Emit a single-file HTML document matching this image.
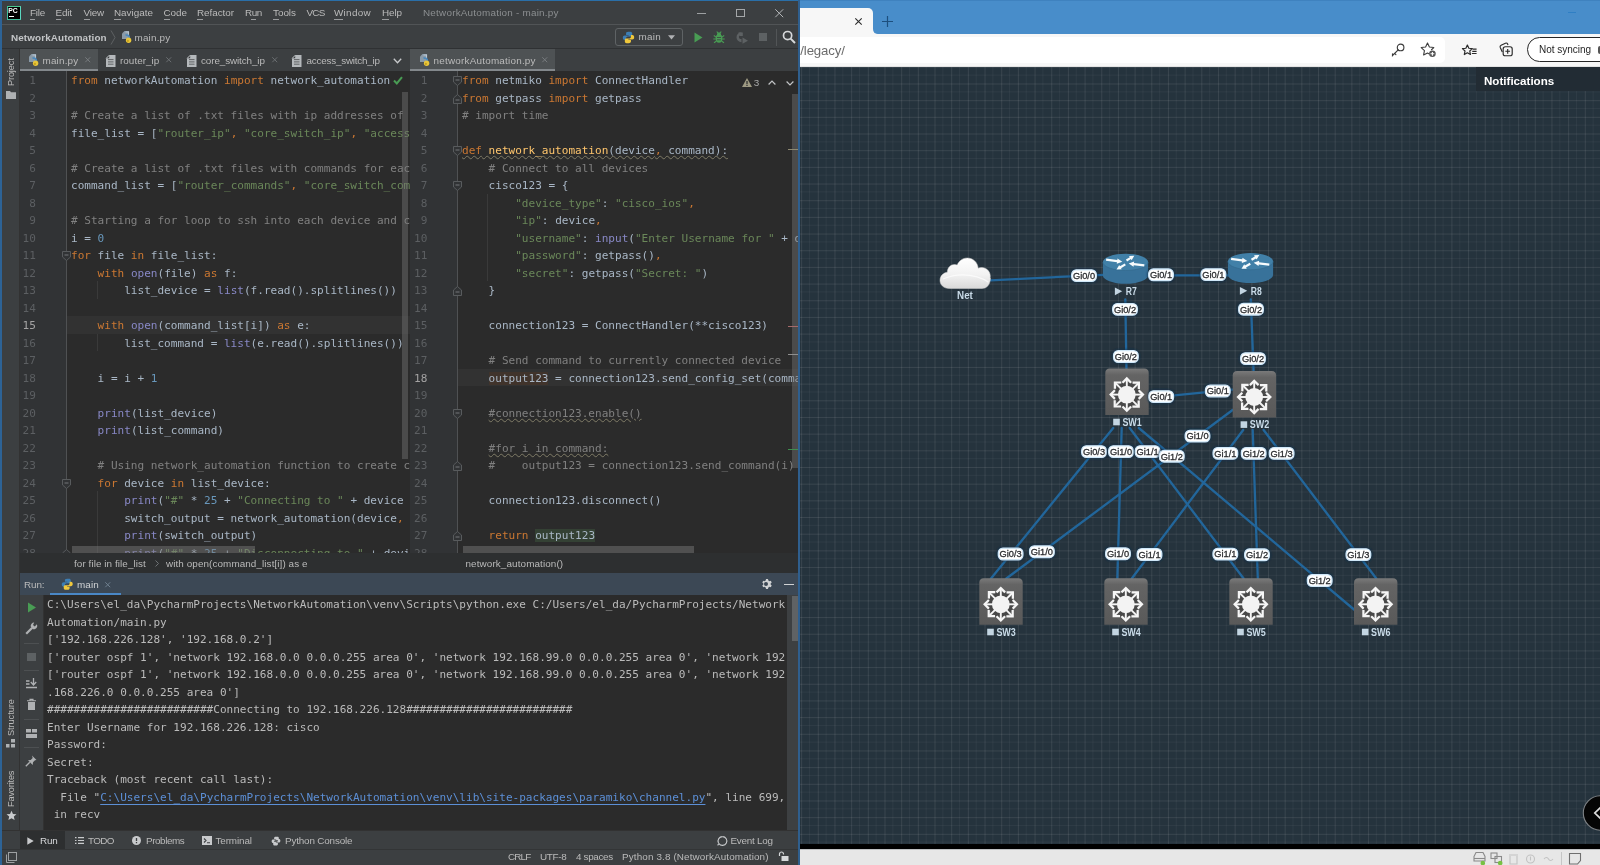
<!DOCTYPE html>
<html><head><meta charset="utf-8"><title>NetworkAutomation - main.py</title>
<style>
*{box-sizing:border-box;margin:0;padding:0}
html,body{width:1600px;height:865px;overflow:hidden;background:#25333d}
body{position:relative;font-family:'Liberation Sans', sans-serif;}
.abs{position:absolute}
.t{position:absolute;white-space:pre;display:block}
#pc{will-change:transform;position:absolute;left:0;top:0;width:800px;height:865px;background:#3c3f41;overflow:hidden}
#br{will-change:transform;position:absolute;left:800px;top:0;width:800px;height:865px;background:#25333d;overflow:hidden}
.code{position:absolute;font-family:'DejaVu Sans Mono', 'Liberation Mono', monospace;font-size:11.06px;line-height:17.5px;color:#a9b7c6;white-space:pre;overflow:hidden}
.code .ln{height:17.5px}
.nums{position:absolute;font-family:'DejaVu Sans Mono', 'Liberation Mono', monospace;font-size:11.06px;line-height:17.5px;color:#5c5f62;text-align:right;white-space:pre;overflow:hidden}
.nums .ln{height:17.5px}
.nums .cur{color:#a4a3a3}
.wavy{text-decoration:underline wavy #7f7b66;text-decoration-thickness:0.55px;text-underline-offset:1.2px}
.con{color:#bbbbbb}
svg{position:absolute;overflow:visible}

#tx{position:absolute;left:0;top:0;width:1600px;height:865px;will-change:transform;pointer-events:none}

</style></head>
<body>
<div id="pc">
<div class="abs" style="left:0px;top:24px;width:800px;height:1px;background:#515456;"></div>
<div class="abs" style="left:0px;top:48px;width:800px;height:1px;background:#2f3133;"></div>
<div class="abs" style="left:6.500px;top:5.500px;width:14px;height:14px;background:#000;border:1px solid #3fbf9c;border-right-color:#5ad7c0;border-top-color:#49c98f"></div>
<div class="abs" style="left:8.8px;top:16.3px;width:5px;height:1.1px;background:#ffffff;"></div>
<div class="abs" style="left:30px;top:18.6px;width:4.5px;height:0.9px;background:#9a9c9e;"></div>
<div class="abs" style="left:55.6px;top:18.6px;width:5px;height:0.9px;background:#9a9c9e;"></div>
<div class="abs" style="left:83.5px;top:18.6px;width:6.5px;height:0.9px;background:#9a9c9e;"></div>
<div class="abs" style="left:114px;top:18.6px;width:7px;height:0.9px;background:#9a9c9e;"></div>
<div class="abs" style="left:163.5px;top:18.6px;width:6px;height:0.9px;background:#9a9c9e;"></div>
<div class="abs" style="left:197px;top:18.6px;width:6px;height:0.9px;background:#9a9c9e;"></div>
<div class="abs" style="left:250.5px;top:18.6px;width:5.5px;height:0.9px;background:#9a9c9e;"></div>
<div class="abs" style="left:273px;top:18.6px;width:5.5px;height:0.9px;background:#9a9c9e;"></div>
<div class="abs" style="left:334px;top:18.6px;width:9px;height:0.9px;background:#9a9c9e;"></div>
<div class="abs" style="left:382px;top:18.6px;width:7px;height:0.9px;background:#9a9c9e;"></div>
<div class="abs" style="left:697px;top:12.5px;width:8.5px;height:1px;background:#9da0a2;"></div>
<div class="abs" style="left:736px;top:8.500px;width:8.500px;height:8.500px;border:1px solid #a4a7a9"></div>
<svg style="left:774.75px;top:8.55px" width="8.5" height="8.5" viewBox="0 0 8.5 8.5"><path d="M0.300 0.300L8.2 8.2M8.2 0.300L0.300 8.2" stroke="#b4b7b9" stroke-width="1" fill="none"/></svg>
<svg style="left:110px;top:29.500px" width="6" height="15" viewBox="0 0 6 15"><path d="M1 0.500L5 7.500L1 14.500" stroke="#5e6163" stroke-width="1" fill="none"/></svg>
<svg style="left:120.5px;top:30.5px" width="12" height="13" viewBox="0 0 12 13"><path d="M1 2.500L3.500 0H8v8H1z" fill="#8a9aa8"/><path d="M4.500 1h3v3" fill="none" stroke="#b9c6d2" stroke-width="1.200"/><path d="M4.500 4.200c2.200-.5 4 .3 3.800 2.600-.100 1.500-1.500 2-2.600 2.500" fill="none" stroke="#4b89bd" stroke-width="1.800"/><circle cx="7.600" cy="9.300" r="2.700" fill="#e9c63a"/><circle cx="6.900" cy="9.900" r="1.100" fill="#c9a21e"/></svg>
<div class="abs" style="left:614.500px;top:27.500px;width:68px;height:18.500px;border:1px solid #5f6365;border-radius:3px"></div>
<svg style="left:622px;top:30.5px" width="13" height="13" viewBox="0 0 16 16"><path d="M7.9 1C5.4 1 5 2 5 3v1.8h3.2v.7H3.4C2 5.5 1 6.6 1 8.3c0 1.8 1 2.8 2.3 2.8H5V9c0-1.300 1-2.300 2.300-2.300h3.400C11.700 6.700 12.500 5.900 12.500 4.900V3C12.500 1.900 11.500 1 10.300 1z" fill="#3d7eb4"/><path d="M8.100 15c2.500 0 2.900-1 2.900-2v-1.800H7.800v-.7h4.800c1.400 0 2.400-1.100 2.400-2.800 0-1.800-1-2.800-2.300-2.800H11V7c0 1.300-1 2.300-2.300 2.300H5.300C4.300 9.300 3.500 10.100 3.500 11.100V13c0 1.100 1 2 2.200 2z" fill="#f0c83c"/></svg>
<svg style="left:667.500px;top:34.500px" width="7" height="5" viewBox="0 0 7 5"><path d="M0 0.300h7L3.500 4.600z" fill="#afb1b3"/></svg>
<svg style="left:693.500px;top:31.500px" width="9" height="11" viewBox="0 0 9 11"><path d="M0.500 0.500L8.500 5.500L0.500 10.500z" fill="#499c54"/></svg>
<svg style="left:712.500px;top:30.500px" width="12" height="13" viewBox="0 0 12 13"><ellipse cx="6" cy="7.500" rx="3.400" ry="4.300" fill="#499c54"/><circle cx="6" cy="3.200" r="2" fill="#499c54"/><path d="M0.800 4.500l2.400 1.600M11.200 4.500L8.800 6.100M0.300 8h2.500M11.700 8H9.200M1 11.800l2.200-1.600M11 11.800L8.800 10.200M3.800 0.500l1 1.500M8.200 0.500l-1 1.500" stroke="#499c54" stroke-width="1.100" fill="none"/><path d="M4 6.500h4M4 8.800h4" stroke="#3c3f41" stroke-width="0.800"/></svg>
<svg style="left:735px;top:30.500px" width="14" height="13" viewBox="0 0 14 13"><path d="M6.500 1.200A5 5 0 1 0 6.500 11.200L6.500 8A2 2 0 1 1 6.500 4.200z" fill="#5d6163"/><path d="M3.300 1.500h4.500v3.500H5z" fill="#5d6163"/><path d="M7.500 6.500l5.500 3.200L7.500 12.800z" fill="#5d6163"/></svg>
<div class="abs" style="left:758.5px;top:32.5px;width:8.5px;height:8.5px;background:#5d6163;"></div>
<div class="abs" style="left:776px;top:28.5px;width:1px;height:17px;background:#525557;"></div>
<svg style="left:781.500px;top:30px" width="14" height="14" viewBox="0 0 14 14"><circle cx="5.600" cy="5.600" r="4.100" fill="none" stroke="#d6d8da" stroke-width="1.700"/><path d="M8.600 8.600L13 13" stroke="#d6d8da" stroke-width="2"/></svg>
<div class="abs" style="left:0px;top:49px;width:19.5px;height:800px;background:#3c3f41;border-right:1px solid #323232"></div>
<div class="abs" style="left:11px;top:85.8px;width:0;height:0"><span style="position:absolute;left:0;top:0;transform-origin:0 0;transform:rotate(-90deg) translate(0,-50%);white-space:pre;font:9.2px/12px 'Liberation Sans', sans-serif;letter-spacing:-0.145px;color:#bbbbbb;display:block">Project</span></div>
<svg style="left:6px;top:91px" width="10" height="8" viewBox="0 0 10 8"><path d="M0 0h4l1 1.300h5V8H0z" fill="#aeb1b3"/></svg>
<div class="abs" style="left:11px;top:736px;width:0;height:0"><span style="position:absolute;left:0;top:0;transform-origin:0 0;transform:rotate(-90deg) translate(0,-50%);white-space:pre;font:9.2px/12px 'Liberation Sans', sans-serif;letter-spacing:-0.061px;color:#bbbbbb;display:block">Structure</span></div>
<svg style="left:6px;top:739px" width="9" height="9" viewBox="0 0 9 9"><rect x="5" y="0" width="4" height="3.500" fill="#aeb1b3"/><rect x="0" y="5" width="3.500" height="3.500" fill="#aeb1b3"/><rect x="5" y="5" width="4" height="3.500" fill="#aeb1b3"/></svg>
<div class="abs" style="left:11px;top:806.6px;width:0;height:0"><span style="position:absolute;left:0;top:0;transform-origin:0 0;transform:rotate(-90deg) translate(0,-50%);white-space:pre;font:9.2px/12px 'Liberation Sans', sans-serif;letter-spacing:-0.167px;color:#bbbbbb;display:block">Favorites</span></div>
<svg style="left:5.500px;top:810px" width="11" height="11" viewBox="0 0 24 24"><path d="M12 1.500l3.200 7 7.600.800-5.700 5.100 1.700 7.500L12 18l-6.800 3.900 1.700-7.500L1.200 9.300l7.600-.800z" fill="#c8cacc"/></svg>
<div class="abs" style="left:19.5px;top:49px;width:780px;height:22.3px;background:#3c3f41;"></div>
<div class="abs" style="left:19.5px;top:49px;width:78px;height:22.3px;background:#4e5254;"></div>
<div class="abs" style="left:19.5px;top:68.6px;width:78px;height:2.7px;background:#83888c;"></div>
<svg style="left:28px;top:54px" width="12" height="13" viewBox="0 0 12 13"><path d="M1 2.500L3.500 0H8v8H1z" fill="#8a9aa8"/><path d="M4.500 1h3v3" fill="none" stroke="#b9c6d2" stroke-width="1.200"/><path d="M4.500 4.200c2.200-.5 4 .3 3.800 2.600-.100 1.500-1.500 2-2.600 2.500" fill="none" stroke="#4b89bd" stroke-width="1.800"/><circle cx="7.600" cy="9.300" r="2.700" fill="#e9c63a"/><circle cx="6.900" cy="9.900" r="1.100" fill="#c9a21e"/></svg>
<svg style="left:84.75px;top:57.25px" width="5.5" height="5.5" viewBox="0 0 5.5 5.5"><path d="M0.300 0.300L5.2 5.2M5.2 0.300L0.300 5.2" stroke="#777b7e" stroke-width="1" fill="none"/></svg>
<svg style="left:105.5px;top:54.5px" width="10" height="12" viewBox="0 0 10 12"><path d="M0 3.200L3.200 0H9.500v12H0z" fill="#b4b8bb"/><path d="M0 3.200h3.200V0z" fill="#3c3f41"/><path d="M0.200 3.400L3.400 0.200" stroke="#c4c8cb" stroke-width="0.900"/><path d="M2 4.600h5.500M2 6.900h5.500M2 9.200h5.500" stroke="#45484a" stroke-width="0.750"/></svg>
<svg style="left:165.75px;top:57.25px" width="5.5" height="5.5" viewBox="0 0 5.5 5.5"><path d="M0.300 0.300L5.2 5.2M5.2 0.300L0.300 5.2" stroke="#6a6e71" stroke-width="1" fill="none"/></svg>
<svg style="left:186.5px;top:54.5px" width="10" height="12" viewBox="0 0 10 12"><path d="M0 3.200L3.200 0H9.500v12H0z" fill="#b4b8bb"/><path d="M0 3.200h3.200V0z" fill="#3c3f41"/><path d="M0.200 3.400L3.400 0.200" stroke="#c4c8cb" stroke-width="0.900"/><path d="M2 4.600h5.500M2 6.900h5.500M2 9.200h5.500" stroke="#45484a" stroke-width="0.750"/></svg>
<svg style="left:271.75px;top:57.25px" width="5.5" height="5.5" viewBox="0 0 5.5 5.5"><path d="M0.300 0.300L5.2 5.2M5.2 0.300L0.300 5.2" stroke="#6a6e71" stroke-width="1" fill="none"/></svg>
<svg style="left:292px;top:54.5px" width="10" height="12" viewBox="0 0 10 12"><path d="M0 3.200L3.200 0H9.500v12H0z" fill="#b4b8bb"/><path d="M0 3.200h3.200V0z" fill="#3c3f41"/><path d="M0.200 3.400L3.400 0.200" stroke="#c4c8cb" stroke-width="0.900"/><path d="M2 4.600h5.500M2 6.900h5.500M2 9.200h5.500" stroke="#45484a" stroke-width="0.750"/></svg>
<svg style="left:393px;top:57.500px" width="9" height="6" viewBox="0 0 9 6"><path d="M0.800 0.800L4.500 4.800L8.200 0.800" stroke="#c8cacc" stroke-width="1.300" fill="none"/></svg>
<div class="abs" style="left:410px;top:49px;width:145px;height:22.3px;background:#4e5254;"></div>
<div class="abs" style="left:410px;top:68.6px;width:145px;height:2.7px;background:#83888c;"></div>
<svg style="left:419px;top:54px" width="12" height="13" viewBox="0 0 12 13"><path d="M1 2.500L3.500 0H8v8H1z" fill="#8a9aa8"/><path d="M4.500 1h3v3" fill="none" stroke="#b9c6d2" stroke-width="1.200"/><path d="M4.500 4.200c2.200-.5 4 .3 3.800 2.600-.100 1.500-1.500 2-2.600 2.500" fill="none" stroke="#4b89bd" stroke-width="1.800"/><circle cx="7.600" cy="9.300" r="2.700" fill="#e9c63a"/><circle cx="6.900" cy="9.900" r="1.100" fill="#c9a21e"/></svg>
<svg style="left:542.25px;top:57.25px" width="5.5" height="5.5" viewBox="0 0 5.5 5.5"><path d="M0.300 0.300L5.2 5.2M5.2 0.300L0.300 5.2" stroke="#777b7e" stroke-width="1" fill="none"/></svg>
<div class="abs" style="left:19.5px;top:71.3px;width:390.0px;height:481.7px;background:#2b2b2b;"></div><div class="abs" style="left:66.5px;top:316.3px;width:343.0px;height:17.5px;background:#323232;"></div><div class="abs" style="left:19.5px;top:71.3px;width:47px;height:481.7px;background:#313335;border-right:1px solid #4f5153"></div><div class="nums" style="left:19.5px;top:71.3px;width:16.299999999999997px;height:481.7px"><div style="margin-top:1.0px"><div class="ln">1</div><div class="ln">2</div><div class="ln">3</div><div class="ln">4</div><div class="ln">5</div><div class="ln">6</div><div class="ln">7</div><div class="ln">8</div><div class="ln">9</div><div class="ln">10</div><div class="ln">11</div><div class="ln">12</div><div class="ln">13</div><div class="ln">14</div><div class="ln cur">15</div><div class="ln">16</div><div class="ln">17</div><div class="ln">18</div><div class="ln">19</div><div class="ln">20</div><div class="ln">21</div><div class="ln">22</div><div class="ln">23</div><div class="ln">24</div><div class="ln">25</div><div class="ln">26</div><div class="ln">27</div><div class="ln">28</div></div></div><div class="code" style="left:71px;top:71.3px;width:338.5px;height:481.7px"><div style="margin-top:1.0px"><div class="ln"><span style="color:#cc7832">from</span> networkAutomation <span style="color:#cc7832">import</span> network_automation</div><div class="ln">&nbsp;</div><div class="ln"><span style="color:#808080"># Create a list of .txt files with ip addresses of routers</span></div><div class="ln">file_list = [<span style="color:#6a8759">"router_ip"</span><span style="color:#cc7832">,</span> <span style="color:#6a8759">"core_switch_ip"</span><span style="color:#cc7832">,</span> <span style="color:#6a8759">"access_switch_ip"</span>]</div><div class="ln">&nbsp;</div><div class="ln"><span style="color:#808080"># Create a list of .txt files with commands for each</span></div><div class="ln">command_list = [<span style="color:#6a8759">"router_commands"</span><span style="color:#cc7832">,</span> <span style="color:#6a8759">"core_switch_commands"</span>]</div><div class="ln">&nbsp;</div><div class="ln"><span style="color:#808080"># Starting a for loop to ssh into each device and configure</span></div><div class="ln">i = <span style="color:#6897bb">0</span></div><div class="ln"><span style="color:#cc7832">for</span> file <span style="color:#cc7832">in</span> file_list:</div><div class="ln">    <span style="color:#cc7832">with</span> <span style="color:#8888c6">open</span>(file) <span style="color:#cc7832">as</span> f:</div><div class="ln">        list_device = <span style="color:#8888c6">list</span>(f.read().splitlines())</div><div class="ln">&nbsp;</div><div class="ln">    <span style="color:#cc7832">with</span> <span style="color:#8888c6">open</span>(command_list[i]) <span style="color:#cc7832">as</span> e:</div><div class="ln">        list_command = <span style="color:#8888c6">list</span>(e.read().splitlines())</div><div class="ln">&nbsp;</div><div class="ln">    i = i + <span style="color:#6897bb">1</span></div><div class="ln">&nbsp;</div><div class="ln">    <span style="color:#8888c6">print</span>(list_device)</div><div class="ln">    <span style="color:#8888c6">print</span>(list_command)</div><div class="ln">&nbsp;</div><div class="ln">    <span style="color:#808080"># Using network_automation function to create connection</span></div><div class="ln">    <span style="color:#cc7832">for</span> device <span style="color:#cc7832">in</span> list_device:</div><div class="ln">        <span style="color:#8888c6">print</span>(<span style="color:#6a8759">"#"</span> * <span style="color:#6897bb">25</span> + <span style="color:#6a8759">"Connecting to "</span> + device + <span style="color:#6a8759">"#"</span></div><div class="ln">        switch_output = network_automation(device<span style="color:#cc7832">,</span> list_command)</div><div class="ln">        <span style="color:#8888c6">print</span>(switch_output)</div><div class="ln">        <span style="color:#8888c6">print</span>(<span style="color:#6a8759">"#"</span> * <span style="color:#6897bb">25</span> + <span style="color:#6a8759">"Disconnecting to "</span> + device</div></div></div>
<div class="abs" style="left:409.5px;top:71.3px;width:0.8px;height:482px;background:#323232;"></div>
<div class="abs" style="left:410px;top:71.3px;width:388px;height:481.7px;background:#2b2b2b;"></div><div class="abs" style="left:457.5px;top:368.8px;width:340.5px;height:17.5px;background:#323232;"></div><div class="abs" style="left:410px;top:71.3px;width:47.5px;height:481.7px;background:#313335;border-right:1px solid #4f5153"></div><div class="nums" style="left:410px;top:71.3px;width:17.30000000000001px;height:481.7px"><div style="margin-top:1.0px"><div class="ln">1</div><div class="ln">2</div><div class="ln">3</div><div class="ln">4</div><div class="ln">5</div><div class="ln">6</div><div class="ln">7</div><div class="ln">8</div><div class="ln">9</div><div class="ln">10</div><div class="ln">11</div><div class="ln">12</div><div class="ln">13</div><div class="ln">14</div><div class="ln">15</div><div class="ln">16</div><div class="ln">17</div><div class="ln cur">18</div><div class="ln">19</div><div class="ln">20</div><div class="ln">21</div><div class="ln">22</div><div class="ln">23</div><div class="ln">24</div><div class="ln">25</div><div class="ln">26</div><div class="ln">27</div><div class="ln">28</div></div></div><div class="code" style="left:462px;top:71.3px;width:336px;height:481.7px"><div style="margin-top:1.0px"><div class="ln"><span style="color:#cc7832">from</span> netmiko <span style="color:#cc7832">import</span> ConnectHandler</div><div class="ln"><span style="color:#cc7832">from</span> getpass <span style="color:#cc7832">import</span> getpass</div><div class="ln"><span style="color:#808080"># import time</span></div><div class="ln">&nbsp;</div><div class="ln"><span class="wavy"><span style="color:#cc7832">def</span> <span style="color:#ffc66d">network_automation</span>(device<span style="color:#cc7832">,</span> command):</span></div><div class="ln">    <span style="color:#808080"># Connect to all devices</span></div><div class="ln">    cisco123 = {</div><div class="ln">        <span style="color:#6a8759">"device_type"</span>: <span style="color:#6a8759">"cisco_ios"</span><span style="color:#cc7832">,</span></div><div class="ln">        <span style="color:#6a8759">"ip"</span>: device<span style="color:#cc7832">,</span></div><div class="ln">        <span style="color:#6a8759">"username"</span>: <span style="color:#8888c6">input</span>(<span style="color:#6a8759">"Enter Username for "</span> + device + <span style="color:#6a8759">": "</span>)<span style="color:#cc7832">,</span></div><div class="ln">        <span style="color:#6a8759">"password"</span>: getpass()<span style="color:#cc7832">,</span></div><div class="ln">        <span style="color:#6a8759">"secret"</span>: getpass(<span style="color:#6a8759">"Secret: "</span>)</div><div class="ln">    }</div><div class="ln">&nbsp;</div><div class="ln">    connection123 = ConnectHandler(**cisco123)</div><div class="ln">&nbsp;</div><div class="ln">    <span style="color:#808080"># Send command to currently connected device</span></div><div class="ln">    <span style="background:#40332b">output123</span> = connection123.send_config_set(command)</div><div class="ln">&nbsp;</div><div class="ln">    <span class="wavy" style="color:#808080">#connection123.enable()</span></div><div class="ln">&nbsp;</div><div class="ln">    <span class="wavy" style="color:#808080">#for i in command:</span></div><div class="ln">    <span style="color:#808080">#    output123 = connection123.send_command(i)</span></div><div class="ln">&nbsp;</div><div class="ln">    connection123.disconnect()</div><div class="ln">&nbsp;</div><div class="ln">    <span style="color:#cc7832">return</span> <span style="background:#344134">output123</span></div><div class="ln">&nbsp;</div></div></div>
<div class="abs" style="left:96.8px;top:281.3px;width:1px;height:17.5px;background:#3a3a3a;"></div>
<div class="abs" style="left:96.8px;top:333.8px;width:1px;height:17.5px;background:#3a3a3a;"></div>
<div class="abs" style="left:96.8px;top:491.3px;width:1px;height:70.0px;background:#3a3a3a;"></div>
<div class="abs" style="left:487.4px;top:193.8px;width:1px;height:87.5px;background:#3a3a3a;"></div>
<svg style="left:61.5px;top:251.05px" width="9" height="10" viewBox="0 0 9 10"><path d="M0.500 0.500h8v5.500l-4 3.500l-4-3.500z" fill="#313335" stroke="#585b5d" stroke-width="1"/><path d="M2.500 4h4" stroke="#74777a" stroke-width="1"/></svg>
<svg style="left:61.5px;top:478.55px" width="9" height="10" viewBox="0 0 9 10"><path d="M0.500 0.500h8v5.500l-4 3.500l-4-3.500z" fill="#313335" stroke="#585b5d" stroke-width="1"/><path d="M2.500 4h4" stroke="#74777a" stroke-width="1"/></svg>
<svg style="left:61.5px;top:548.55px" width="9" height="10" viewBox="0 0 9 10"><path d="M0.500 9.500h8v-5.500l-4-3.500l-4 3.500z" fill="#313335" stroke="#585b5d" stroke-width="1"/><path d="M2.500 6h4" stroke="#74777a" stroke-width="1"/></svg>
<svg style="left:452.5px;top:76.05px" width="9" height="10" viewBox="0 0 9 10"><path d="M0.500 0.500h8v5.500l-4 3.500l-4-3.500z" fill="#313335" stroke="#585b5d" stroke-width="1"/><path d="M2.500 4h4" stroke="#74777a" stroke-width="1"/></svg>
<svg style="left:452.5px;top:146.05px" width="9" height="10" viewBox="0 0 9 10"><path d="M0.500 0.500h8v5.500l-4 3.500l-4-3.500z" fill="#313335" stroke="#585b5d" stroke-width="1"/><path d="M2.500 4h4" stroke="#74777a" stroke-width="1"/></svg>
<svg style="left:452.5px;top:181.05px" width="9" height="10" viewBox="0 0 9 10"><path d="M0.500 0.500h8v5.500l-4 3.500l-4-3.500z" fill="#313335" stroke="#585b5d" stroke-width="1"/><path d="M2.500 4h4" stroke="#74777a" stroke-width="1"/></svg>
<svg style="left:452.5px;top:408.55px" width="9" height="10" viewBox="0 0 9 10"><path d="M0.500 0.500h8v5.500l-4 3.500l-4-3.500z" fill="#313335" stroke="#585b5d" stroke-width="1"/><path d="M2.500 4h4" stroke="#74777a" stroke-width="1"/></svg>
<svg style="left:452.5px;top:93.55px" width="9" height="10" viewBox="0 0 9 10"><path d="M0.500 9.500h8v-5.500l-4-3.500l-4 3.500z" fill="#313335" stroke="#585b5d" stroke-width="1"/><path d="M2.500 6h4" stroke="#74777a" stroke-width="1"/></svg>
<svg style="left:452.5px;top:286.05px" width="9" height="10" viewBox="0 0 9 10"><path d="M0.500 9.500h8v-5.500l-4-3.500l-4 3.500z" fill="#313335" stroke="#585b5d" stroke-width="1"/><path d="M2.500 6h4" stroke="#74777a" stroke-width="1"/></svg>
<svg style="left:452.5px;top:461.05px" width="9" height="10" viewBox="0 0 9 10"><path d="M0.500 9.500h8v-5.500l-4-3.500l-4 3.500z" fill="#313335" stroke="#585b5d" stroke-width="1"/><path d="M2.500 6h4" stroke="#74777a" stroke-width="1"/></svg>
<svg style="left:452.5px;top:531.05px" width="9" height="10" viewBox="0 0 9 10"><path d="M0.500 9.500h8v-5.500l-4-3.500l-4 3.500z" fill="#313335" stroke="#585b5d" stroke-width="1"/><path d="M2.500 6h4" stroke="#74777a" stroke-width="1"/></svg>
<svg style="left:393px;top:76px" width="10" height="9" viewBox="0 0 10 9"><path d="M1 4.500L3.800 7.500L9 1.200" stroke="#499c54" stroke-width="2" fill="none"/></svg>
<svg style="left:741.500px;top:78px" width="10" height="9" viewBox="0 0 10 9"><path d="M5 0L10 9H0z" fill="#9e9a83"/><path d="M5 3v3.200M5 7v1" stroke="#2b2b2b" stroke-width="1.200"/></svg>
<svg style="left:767.500px;top:80px" width="8" height="5" viewBox="0 0 8 5"><path d="M0.600 4.500L4 1L7.400 4.500" stroke="#c3c5c7" stroke-width="1.200" fill="none"/></svg>
<svg style="left:785.500px;top:81px" width="8" height="5" viewBox="0 0 8 5"><path d="M0.600 0.500L4 4L7.400 0.500" stroke="#c3c5c7" stroke-width="1.200" fill="none"/></svg>
<div class="abs" style="left:402px;top:92px;width:6.3px;height:367px;background:rgba(120,120,120,0.42);"></div>
<div class="abs" style="left:792px;top:94px;width:6px;height:374px;background:rgba(120,120,120,0.42);"></div>
<div class="abs" style="left:72px;top:546px;width:183px;height:6.5px;background:rgba(125,125,125,0.46);"></div>
<div class="abs" style="left:462.5px;top:546px;width:231px;height:6.5px;background:rgba(125,125,125,0.46);"></div>
<div class="abs" style="left:788px;top:148.5px;width:10px;height:1px;background:#8f8a72;"></div>
<div class="abs" style="left:788px;top:325.5px;width:10px;height:1px;background:#a56a6a;"></div>
<div class="abs" style="left:788px;top:353.5px;width:10px;height:1px;background:#8f8f8f;"></div>
<div class="abs" style="left:788px;top:448.5px;width:10px;height:1px;background:#3f8f4f;"></div>
<div class="abs" style="left:19.5px;top:553px;width:779px;height:20.5px;background:#2d2f30;"></div>
<svg style="left:155px;top:560px" width="4" height="7" viewBox="0 0 4 7"><path d="M0.500 0.500L3.500 3.500L0.500 6.500" stroke="#6e7275" stroke-width="1" fill="none"/></svg>
<div class="abs" style="left:19.5px;top:573.2px;width:779px;height:21.8px;background:#3c4855;"></div>
<svg style="left:61px;top:578px" width="12.5" height="12.5" viewBox="0 0 16 16"><path d="M7.9 1C5.4 1 5 2 5 3v1.8h3.2v.7H3.4C2 5.5 1 6.6 1 8.3c0 1.8 1 2.8 2.3 2.8H5V9c0-1.300 1-2.300 2.300-2.300h3.400C11.700 6.700 12.500 5.900 12.500 4.900V3C12.500 1.900 11.500 1 10.300 1z" fill="#3d7eb4"/><path d="M8.100 15c2.500 0 2.900-1 2.900-2v-1.800H7.800v-.7h4.800c1.400 0 2.400-1.100 2.400-2.800 0-1.800-1-2.800-2.300-2.800H11V7c0 1.300-1 2.300-2.300 2.300H5.300C4.300 9.300 3.500 10.100 3.500 11.100V13c0 1.100 1 2 2.200 2z" fill="#f0c83c"/></svg>
<svg style="left:105.25px;top:581.75px" width="5.5" height="5.5" viewBox="0 0 5.5 5.5"><path d="M0.300 0.300L5.2 5.2M5.2 0.300L0.300 5.2" stroke="#6e7f8e" stroke-width="1" fill="none"/></svg>
<div class="abs" style="left:50px;top:592.6px;width:71px;height:2.6px;background:#4a88c7;"></div>
<svg style="left:761px;top:578px" width="12" height="12" viewBox="0 0 24 24"><path d="M12 8a4 4 0 1 0 0 8 4 4 0 0 0 0-8zm9.400 5.500l2.100 1.600-2 3.500-2.500-1a7.600 7.600 0 0 1-2.500 1.500L16 22h-4l-.5-2.900A7.600 7.600 0 0 1 9 17.600l-2.500 1-2-3.500 2.100-1.600a7.700 7.700 0 0 1 0-3L4.500 8.900l2-3.500 2.500 1A7.600 7.600 0 0 1 11.500 4.900L12 2h4l.5 2.900A7.600 7.600 0 0 1 19 6.400l2.500-1 2 3.500-2.100 1.600a7.700 7.700 0 0 1 0 3z" transform="translate(-2,0)" fill="#d0d2d4" fill-rule="evenodd"/></svg>
<div class="abs" style="left:783.5px;top:583.5px;width:10px;height:1.3px;background:#d0d2d4;"></div>
<div class="abs" style="left:19.5px;top:595px;width:24px;height:235px;background:#3c3f41;border-right:1px solid #323232"></div>
<div class="abs" style="left:43.5px;top:595px;width:755px;height:235px;background:#2b2b2b;"></div>
<div class="code con" style="left:47px;top:596.300px;width:745px;height:233.500px;color:#bbbbbb"><div class="ln">C:\Users\el_da\PycharmProjects\NetworkAutomation\venv\Scripts\python.exe C:/Users/el_da/PycharmProjects/Network</div><div class="ln">Automation/main.py</div><div class="ln">['192.168.226.128', '192.168.0.2']</div><div class="ln">['router ospf 1', 'network 192.168.0.0 0.0.0.255 area 0', 'network 192.168.99.0 0.0.0.255 area 0', 'network 192</div><div class="ln">['router ospf 1', 'network 192.168.0.0 0.0.0.255 area 0', 'network 192.168.99.0 0.0.0.255 area 0', 'network 192</div><div class="ln">.168.226.0 0.0.0.255 area 0']</div><div class="ln">#########################Connecting to 192.168.226.128#########################</div><div class="ln">Enter Username for 192.168.226.128: cisco</div><div class="ln">Password:</div><div class="ln">Secret:</div><div class="ln">Traceback (most recent call last):</div><div class="ln">  File "<span style="color:#5c8fd6;text-decoration:underline;text-decoration-thickness:1px;text-underline-offset:3px">C:\Users\el_da\PycharmProjects\NetworkAutomation\venv\lib\site-packages\paramiko\channel.py</span>", line 699,</div><div class="ln"> in recv</div></div>
<div class="abs" style="left:787.4px;top:595px;width:11px;height:235px;background:#3d4042;"></div>
<div class="abs" style="left:792.4px;top:596px;width:5.6px;height:45px;background:#5f6264;"></div>
<svg style="left:26.500px;top:601.500px" width="10" height="11" viewBox="0 0 9 11"><path d="M0.500 0.500L8.500 5.500L0.500 10.500z" fill="#499c54"/></svg>
<svg style="left:25px;top:622px" width="13" height="13" viewBox="0 0 13 13"><path d="M1.200 11.800L7 6" stroke="#afb1b3" stroke-width="2.200" fill="none"/><path d="M11.800 2.200A3.300 3.300 0 1 1 9.200 0.600L8 3l1.800 1.600z" fill="#afb1b3"/></svg>
<div class="abs" style="left:24px;top:643px;width:15px;height:1px;background:#4d5052;"></div>
<div class="abs" style="left:27px;top:652.5px;width:8.5px;height:8.5px;background:#5d6163;"></div>
<div class="abs" style="left:24px;top:670px;width:15px;height:1px;background:#4d5052;"></div>
<svg style="left:25.500px;top:678px" width="11" height="11" viewBox="0 0 11 11"><path d="M0 3h3.500M0 6h3.500M0 9.500h11" stroke="#afb1b3" stroke-width="1.300"/><path d="M7.500 0v6M4.800 4l2.700 3 2.700-3" stroke="#afb1b3" stroke-width="1.300" fill="none"/></svg>
<svg style="left:26.500px;top:699px" width="9" height="11" viewBox="0 0 9 11"><path d="M0 1.800h9M3 1.800V0.400h3v1.400" stroke="#afb1b3" stroke-width="1.100" fill="none"/><path d="M1 3h7v8H1z" fill="#afb1b3"/></svg>
<div class="abs" style="left:24px;top:719px;width:15px;height:1px;background:#4d5052;"></div>
<svg style="left:25.500px;top:728.500px" width="11" height="9" viewBox="0 0 11 9"><path d="M0 0h5v3.500H0zM6 0h5v3.500H6zM0 5h11v4H0z" fill="#afb1b3"/></svg>
<div class="abs" style="left:24px;top:747px;width:15px;height:1px;background:#4d5052;"></div>
<svg style="left:25px;top:755px" width="12" height="12" viewBox="0 0 12 12"><path d="M7 0.500l4.500 4.500-1.500.300-2 2-.300 2.700L3 5.300l2.700-.300 2-2z" fill="#afb1b3"/><path d="M4.800 7.200L0.800 11.200" stroke="#afb1b3" stroke-width="1.300"/></svg>
<div class="abs" style="left:0px;top:830px;width:798px;height:18.5px;background:#3c3f41;border-top:1px solid #323232"></div>
<div class="abs" style="left:19.5px;top:830.5px;width:45.5px;height:18px;background:#2d2f30;"></div>
<svg style="left:27px;top:836.500px" width="7" height="8" viewBox="0 0 7 8"><path d="M0.300 0.300L6.700 4L0.300 7.700z" fill="#c8cacc"/></svg>
<svg style="left:75px;top:837px" width="9" height="7" viewBox="0 0 9 7"><path d="M0 0.600h1.500M0 3.500h1.500M0 6.400h1.500M3 0.600h6M3 3.500h6M3 6.400h6" stroke="#c8cacc" stroke-width="1.200"/></svg>
<svg style="left:131.500px;top:836px" width="9" height="9" viewBox="0 0 9 9"><circle cx="4.500" cy="4.500" r="4.500" fill="#c8cacc"/><path d="M4.500 2v3M4.500 6v1.200" stroke="#3c3f41" stroke-width="1.300"/></svg>
<svg style="left:202px;top:836px" width="10" height="9" viewBox="0 0 10 9"><rect width="10" height="9" fill="#c8cacc"/><path d="M2 2.500l2 2-2 2M5 6.800h3" stroke="#3c3f41" stroke-width="1.100" fill="none"/></svg>
<svg style="left:271px;top:836px" width="10" height="10" viewBox="0 0 16 16"><path d="M7.9 1C5.4 1 5 2 5 3v1.8h3.2v.7H3.4C2 5.5 1 6.6 1 8.3c0 1.8 1 2.8 2.3 2.8H5V9c0-1.300 1-2.300 2.300-2.300h3.400C11.700 6.700 12.500 5.900 12.500 4.900V3C12.500 1.900 11.500 1 10.300 1z" fill="#c8cacc"/><path d="M8.100 15c2.500 0 2.900-1 2.900-2v-1.800H7.800v-.7h4.800c1.400 0 2.400-1.100 2.400-2.800 0-1.800-1-2.800-2.300-2.800H11V7c0 1.300-1 2.300-2.300 2.300H5.300C4.300 9.300 3.500 10.100 3.500 11.100V13c0 1.100 1 2 2.200 2z" fill="#c8cacc"/></svg>
<svg style="left:717px;top:836px" width="11" height="10" viewBox="0 0 11 10"><path d="M5.500 0.600a4.400 4.400 0 1 1-3.600 7L0.600 9.400" stroke="#c8cacc" stroke-width="1.100" fill="none"/><path d="M5.500 0.600a4.400 4.400 0 0 0-4 6.300" stroke="#c8cacc" stroke-width="1.100" fill="none"/></svg>
<div class="abs" style="left:0px;top:848.5px;width:798px;height:16.5px;background:#3c3f41;border-top:1px solid #333536"></div>
<svg style="left:6px;top:852px" width="11" height="11" viewBox="0 0 11 11"><rect x="2.500" y="0.500" width="8" height="8" fill="none" stroke="#9da0a2" stroke-width="1"/><path d="M0.500 2.500v8h8" fill="none" stroke="#9da0a2" stroke-width="1"/></svg>
<svg style="left:778px;top:851px" width="11" height="11" viewBox="0 0 11 11"><path d="M1.500 5V3a2 2 0 0 1 4 0v0.500" stroke="#d6d8da" stroke-width="1.200" fill="none"/><rect x="3.500" y="5" width="7" height="5" fill="#d6d8da"/></svg>
<div class="abs" style="left:0px;top:0px;width:800px;height:1.2px;background:#2a6fa8;"></div>
<div class="abs" style="left:0px;top:0px;width:1.7px;height:865px;background:#2d6396;"></div>
<div class="abs" style="left:798.2px;top:0px;width:1.8px;height:865px;background:#2f5f8e;"></div>
</div>
<div id="br">
<svg style="left:0;top:0" width="800" height="865" viewBox="800 0 800 865" font-family="'Liberation Sans', sans-serif">
<defs>
<pattern id="grid" x="817.800" y="83.500" width="16.674" height="16.674" patternUnits="userSpaceOnUse">
<rect width="16.674" height="16.674" fill="#25333d"/>
<path d="M8.337 0V16.674M0 8.337H16.674" stroke="#ffffff" stroke-opacity="0.048" stroke-width="0.900"/>
<path d="M0.450 0V16.674M0 0.450H16.674" stroke="#ffffff" stroke-opacity="0.105" stroke-width="0.900"/>
</pattern>
<filter id="glow" x="-30%" y="-50%" width="160%" height="200%"><feGaussianBlur stdDeviation="1.300"/></filter>
<filter id="soft" x="-10%" y="-10%" width="120%" height="120%"><feGaussianBlur stdDeviation="0.350"/></filter>
<linearGradient id="swg" x1="0" y1="0" x2="0" y2="1"><stop offset="0" stop-color="#7a7a7a"/><stop offset="0.140" stop-color="#646464"/><stop offset="1" stop-color="#595959"/></linearGradient>
<linearGradient id="cl" x1="0" y1="0" x2="0" y2="1"><stop offset="0" stop-color="#ffffff"/><stop offset="0.550" stop-color="#f2f2f2"/><stop offset="1" stop-color="#d9d9d9"/></linearGradient>
</defs>
<rect x="800" y="66" width="800" height="778.500" fill="url(#grid)"/>
<g stroke="#22669b" stroke-width="2.300" stroke-linecap="round" fill="none">
<path d="M990.5 280.3L1104 274.8"/>
<path d="M1148 275.4L1228 275.4"/>
<path d="M1125.3 299.5L1126.5 370"/>
<path d="M1250.8 299.5L1253.6 372"/>
<path d="M1148.6 397.8L1232.6 389.6"/>
<path d="M1113.2 428L991 578.5"/>
<path d="M1121.7 428L1117.3 578.5"/>
<path d="M1129.7 428L1243.6 578.5"/>
<path d="M1138.8 428L1354 609.5"/>
<path d="M1232.6 410L1006.3 578.5"/>
<path d="M1243.2 430L1131.8 578.5"/>
<path d="M1252.7 430L1257.8 578.5"/>
<path d="M1263.6 430L1376.3 578.5"/>
</g>
<g transform="translate(940,258)"><path d="M9.500 30.500C3.500 30.500 0 26.800 0 22.300c0-4.200 3.200-7.500 7.300-8C7.300 9.800 10.500 6.500 14.600 6.500c.9 0 1.800.2 2.600.5C18.900 2.900 22.700 0 27.300 0c5.800 0 10.500 4.500 10.800 10.200 1.100-.5 2.300-.7 3.500-.7 4.800 0 8.700 3.900 8.700 8.700 0 .6-.1 1.200-.2 1.800.2 0 .3 0 .4.100 0 0 0 10.400-8.500 10.400z" fill="url(#cl)" stroke="#cfcfcf" stroke-width="0.500"/><path d="M3 21c9-4 22-5.500 34-2.200 5 1.400 9 3.500 11.500 5.500" fill="none" stroke="#ffffff" stroke-width="1.200" opacity="0.700"/></g>
<text x="965" y="298.900" text-anchor="middle" font-size="10.200" font-weight="bold" fill="#c9dbe8" textLength="15.800" lengthAdjust="spacingAndGlyphs">Net</text>
<path d="M1102.90 262.10V275.40A22.6 8.4 0 0 0 1148.10 275.40V262.10z" fill="#38729a"/><ellipse cx="1125.50" cy="262.10" rx="22.6" ry="8.4" fill="#4180a8"/><path d="M1102.90 262.10A22.6 8.4 0 0 0 1148.10 262.10" fill="none" stroke="#336a8e" stroke-width="0.700"/><g transform="translate(1125.50,262.10)" fill="#f7fbfd"><polygon points="-19.55,-1.36 -8.51,0.14 -8.72,1.68 -3.20,-0.30 -7.99,-3.68 -8.20,-2.14 -19.25,-3.64"/><polygon points="18.93,2.06 8.50,0.85 8.68,-0.69 3.20,1.40 8.06,4.68 8.23,3.14 18.67,4.34"/><polygon points="1.57,-0.66 5.43,-2.98 6.15,-1.78 8.80,-6.30 3.57,-6.07 4.29,-4.87 0.43,-2.54"/><polygon points="-0.75,1.35 -5.57,4.14 -6.27,2.93 -9.00,7.40 -3.77,7.26 -4.47,6.05 0.35,3.25"/></g><path d="M1114.90 287.40l7.300 3.900l-7.300 3.900z" fill="#c3d5e2"/><text x="1125.80" y="295.00" font-size="10.200" font-weight="bold" fill="#c9dbe8" textLength="11" lengthAdjust="spacingAndGlyphs">R7</text>
<path d="M1227.90 261.40V274.70A22.6 8.4 0 0 0 1273.10 274.70V261.40z" fill="#38729a"/><ellipse cx="1250.50" cy="261.40" rx="22.6" ry="8.4" fill="#4180a8"/><path d="M1227.90 261.40A22.6 8.4 0 0 0 1273.10 261.40" fill="none" stroke="#336a8e" stroke-width="0.700"/><g transform="translate(1250.50,261.40)" fill="#f7fbfd"><polygon points="-19.55,-1.36 -8.51,0.14 -8.72,1.68 -3.20,-0.30 -7.99,-3.68 -8.20,-2.14 -19.25,-3.64"/><polygon points="18.93,2.06 8.50,0.85 8.68,-0.69 3.20,1.40 8.06,4.68 8.23,3.14 18.67,4.34"/><polygon points="1.57,-0.66 5.43,-2.98 6.15,-1.78 8.80,-6.30 3.57,-6.07 4.29,-4.87 0.43,-2.54"/><polygon points="-0.75,1.35 -5.57,4.14 -6.27,2.93 -9.00,7.40 -3.77,7.26 -4.47,6.05 0.35,3.25"/></g><path d="M1239.90 286.90l7.300 3.900l-7.300 3.900z" fill="#c3d5e2"/><text x="1250.80" y="294.50" font-size="10.200" font-weight="bold" fill="#c9dbe8" textLength="11" lengthAdjust="spacingAndGlyphs">R8</text>
<path d="M1105.30 415.10V373.00q0-4.500 4.500-4.500h34.40q4.500 0 4.500 4.500V415.10z" fill="url(#swg)"/><g transform="translate(1126.80,394.60)"><circle r="12.300" fill="#484848"/><g transform="rotate(0)"><path d="M-4.300 -11.900L0 -16.200L4.300 -11.900" fill="none" stroke="#f6f6f6" stroke-width="2.200" stroke-linejoin="miter" stroke-miterlimit="6"/><path d="M0 -16V-7" stroke="#f6f6f6" stroke-width="1.900"/><path d="M5.800 -11.900H12.100V-5.600" fill="none" stroke="#f6f6f6" stroke-width="2.200" stroke-linejoin="miter"/><path d="M12 -11.800L5 -4.800" stroke="#f6f6f6" stroke-width="1.900"/></g><g transform="rotate(90)"><path d="M-4.300 -11.900L0 -16.200L4.300 -11.900" fill="none" stroke="#f6f6f6" stroke-width="2.200" stroke-linejoin="miter" stroke-miterlimit="6"/><path d="M0 -16V-7" stroke="#f6f6f6" stroke-width="1.900"/><path d="M5.800 -11.900H12.100V-5.600" fill="none" stroke="#f6f6f6" stroke-width="2.200" stroke-linejoin="miter"/><path d="M12 -11.800L5 -4.800" stroke="#f6f6f6" stroke-width="1.900"/></g><g transform="rotate(180)"><path d="M-4.300 -11.900L0 -16.200L4.300 -11.900" fill="none" stroke="#f6f6f6" stroke-width="2.200" stroke-linejoin="miter" stroke-miterlimit="6"/><path d="M0 -16V-7" stroke="#f6f6f6" stroke-width="1.900"/><path d="M5.800 -11.900H12.100V-5.600" fill="none" stroke="#f6f6f6" stroke-width="2.200" stroke-linejoin="miter"/><path d="M12 -11.800L5 -4.800" stroke="#f6f6f6" stroke-width="1.900"/></g><g transform="rotate(270)"><path d="M-4.300 -11.900L0 -16.200L4.300 -11.900" fill="none" stroke="#f6f6f6" stroke-width="2.200" stroke-linejoin="miter" stroke-miterlimit="6"/><path d="M0 -16V-7" stroke="#f6f6f6" stroke-width="1.900"/><path d="M5.800 -11.900H12.100V-5.600" fill="none" stroke="#f6f6f6" stroke-width="2.200" stroke-linejoin="miter"/><path d="M12 -11.800L5 -4.800" stroke="#f6f6f6" stroke-width="1.900"/></g><circle r="8.900" fill="#f3f3f3"/></g><rect x="1113.20" y="418.70" width="6.600" height="6.600" fill="#c3d5e2"/><text x="1122.40" y="425.70" font-size="10.200" font-weight="bold" fill="#c9dbe8" textLength="19.400" lengthAdjust="spacingAndGlyphs">SW1</text>
<path d="M1232.70 417.50V375.40q0-4.500 4.500-4.500h34.40q4.500 0 4.500 4.500V417.50z" fill="url(#swg)"/><g transform="translate(1254.20,397.00)"><circle r="12.300" fill="#484848"/><g transform="rotate(0)"><path d="M-4.300 -11.900L0 -16.200L4.300 -11.900" fill="none" stroke="#f6f6f6" stroke-width="2.200" stroke-linejoin="miter" stroke-miterlimit="6"/><path d="M0 -16V-7" stroke="#f6f6f6" stroke-width="1.900"/><path d="M5.800 -11.900H12.100V-5.600" fill="none" stroke="#f6f6f6" stroke-width="2.200" stroke-linejoin="miter"/><path d="M12 -11.800L5 -4.800" stroke="#f6f6f6" stroke-width="1.900"/></g><g transform="rotate(90)"><path d="M-4.300 -11.900L0 -16.200L4.300 -11.900" fill="none" stroke="#f6f6f6" stroke-width="2.200" stroke-linejoin="miter" stroke-miterlimit="6"/><path d="M0 -16V-7" stroke="#f6f6f6" stroke-width="1.900"/><path d="M5.800 -11.900H12.100V-5.600" fill="none" stroke="#f6f6f6" stroke-width="2.200" stroke-linejoin="miter"/><path d="M12 -11.800L5 -4.800" stroke="#f6f6f6" stroke-width="1.900"/></g><g transform="rotate(180)"><path d="M-4.300 -11.900L0 -16.200L4.300 -11.900" fill="none" stroke="#f6f6f6" stroke-width="2.200" stroke-linejoin="miter" stroke-miterlimit="6"/><path d="M0 -16V-7" stroke="#f6f6f6" stroke-width="1.900"/><path d="M5.800 -11.900H12.100V-5.600" fill="none" stroke="#f6f6f6" stroke-width="2.200" stroke-linejoin="miter"/><path d="M12 -11.800L5 -4.800" stroke="#f6f6f6" stroke-width="1.900"/></g><g transform="rotate(270)"><path d="M-4.300 -11.900L0 -16.200L4.300 -11.900" fill="none" stroke="#f6f6f6" stroke-width="2.200" stroke-linejoin="miter" stroke-miterlimit="6"/><path d="M0 -16V-7" stroke="#f6f6f6" stroke-width="1.900"/><path d="M5.800 -11.900H12.100V-5.600" fill="none" stroke="#f6f6f6" stroke-width="2.200" stroke-linejoin="miter"/><path d="M12 -11.800L5 -4.800" stroke="#f6f6f6" stroke-width="1.900"/></g><circle r="8.900" fill="#f3f3f3"/></g><rect x="1240.60" y="421.30" width="6.600" height="6.600" fill="#c3d5e2"/><text x="1249.80" y="428.30" font-size="10.200" font-weight="bold" fill="#c9dbe8" textLength="19.400" lengthAdjust="spacingAndGlyphs">SW2</text>
<path d="M979.30 624.80V582.70q0-4.500 4.500-4.500h34.40q4.500 0 4.500 4.500V624.80z" fill="url(#swg)"/><g transform="translate(1000.80,604.30)"><circle r="12.300" fill="#484848"/><g transform="rotate(0)"><path d="M-4.300 -11.900L0 -16.200L4.300 -11.900" fill="none" stroke="#f6f6f6" stroke-width="2.200" stroke-linejoin="miter" stroke-miterlimit="6"/><path d="M0 -16V-7" stroke="#f6f6f6" stroke-width="1.900"/><path d="M5.800 -11.900H12.100V-5.600" fill="none" stroke="#f6f6f6" stroke-width="2.200" stroke-linejoin="miter"/><path d="M12 -11.800L5 -4.800" stroke="#f6f6f6" stroke-width="1.900"/></g><g transform="rotate(90)"><path d="M-4.300 -11.900L0 -16.200L4.300 -11.900" fill="none" stroke="#f6f6f6" stroke-width="2.200" stroke-linejoin="miter" stroke-miterlimit="6"/><path d="M0 -16V-7" stroke="#f6f6f6" stroke-width="1.900"/><path d="M5.800 -11.900H12.100V-5.600" fill="none" stroke="#f6f6f6" stroke-width="2.200" stroke-linejoin="miter"/><path d="M12 -11.800L5 -4.800" stroke="#f6f6f6" stroke-width="1.900"/></g><g transform="rotate(180)"><path d="M-4.300 -11.900L0 -16.200L4.300 -11.900" fill="none" stroke="#f6f6f6" stroke-width="2.200" stroke-linejoin="miter" stroke-miterlimit="6"/><path d="M0 -16V-7" stroke="#f6f6f6" stroke-width="1.900"/><path d="M5.800 -11.900H12.100V-5.600" fill="none" stroke="#f6f6f6" stroke-width="2.200" stroke-linejoin="miter"/><path d="M12 -11.800L5 -4.800" stroke="#f6f6f6" stroke-width="1.900"/></g><g transform="rotate(270)"><path d="M-4.300 -11.900L0 -16.200L4.300 -11.900" fill="none" stroke="#f6f6f6" stroke-width="2.200" stroke-linejoin="miter" stroke-miterlimit="6"/><path d="M0 -16V-7" stroke="#f6f6f6" stroke-width="1.900"/><path d="M5.800 -11.900H12.100V-5.600" fill="none" stroke="#f6f6f6" stroke-width="2.200" stroke-linejoin="miter"/><path d="M12 -11.800L5 -4.800" stroke="#f6f6f6" stroke-width="1.900"/></g><circle r="8.900" fill="#f3f3f3"/></g><rect x="987.20" y="628.70" width="6.600" height="6.600" fill="#c3d5e2"/><text x="996.40" y="635.70" font-size="10.200" font-weight="bold" fill="#c9dbe8" textLength="19.400" lengthAdjust="spacingAndGlyphs">SW3</text>
<path d="M1104.30 624.80V582.70q0-4.500 4.500-4.500h34.40q4.500 0 4.500 4.500V624.80z" fill="url(#swg)"/><g transform="translate(1125.80,604.30)"><circle r="12.300" fill="#484848"/><g transform="rotate(0)"><path d="M-4.300 -11.900L0 -16.200L4.300 -11.900" fill="none" stroke="#f6f6f6" stroke-width="2.200" stroke-linejoin="miter" stroke-miterlimit="6"/><path d="M0 -16V-7" stroke="#f6f6f6" stroke-width="1.900"/><path d="M5.800 -11.900H12.100V-5.600" fill="none" stroke="#f6f6f6" stroke-width="2.200" stroke-linejoin="miter"/><path d="M12 -11.800L5 -4.800" stroke="#f6f6f6" stroke-width="1.900"/></g><g transform="rotate(90)"><path d="M-4.300 -11.900L0 -16.200L4.300 -11.900" fill="none" stroke="#f6f6f6" stroke-width="2.200" stroke-linejoin="miter" stroke-miterlimit="6"/><path d="M0 -16V-7" stroke="#f6f6f6" stroke-width="1.900"/><path d="M5.800 -11.900H12.100V-5.600" fill="none" stroke="#f6f6f6" stroke-width="2.200" stroke-linejoin="miter"/><path d="M12 -11.800L5 -4.800" stroke="#f6f6f6" stroke-width="1.900"/></g><g transform="rotate(180)"><path d="M-4.300 -11.900L0 -16.200L4.300 -11.900" fill="none" stroke="#f6f6f6" stroke-width="2.200" stroke-linejoin="miter" stroke-miterlimit="6"/><path d="M0 -16V-7" stroke="#f6f6f6" stroke-width="1.900"/><path d="M5.800 -11.900H12.100V-5.600" fill="none" stroke="#f6f6f6" stroke-width="2.200" stroke-linejoin="miter"/><path d="M12 -11.800L5 -4.800" stroke="#f6f6f6" stroke-width="1.900"/></g><g transform="rotate(270)"><path d="M-4.300 -11.900L0 -16.200L4.300 -11.900" fill="none" stroke="#f6f6f6" stroke-width="2.200" stroke-linejoin="miter" stroke-miterlimit="6"/><path d="M0 -16V-7" stroke="#f6f6f6" stroke-width="1.900"/><path d="M5.800 -11.900H12.100V-5.600" fill="none" stroke="#f6f6f6" stroke-width="2.200" stroke-linejoin="miter"/><path d="M12 -11.800L5 -4.800" stroke="#f6f6f6" stroke-width="1.900"/></g><circle r="8.900" fill="#f3f3f3"/></g><rect x="1112.20" y="628.70" width="6.600" height="6.600" fill="#c3d5e2"/><text x="1121.40" y="635.70" font-size="10.200" font-weight="bold" fill="#c9dbe8" textLength="19.400" lengthAdjust="spacingAndGlyphs">SW4</text>
<path d="M1229.30 624.80V582.70q0-4.500 4.500-4.500h34.40q4.500 0 4.500 4.500V624.80z" fill="url(#swg)"/><g transform="translate(1250.80,604.30)"><circle r="12.300" fill="#484848"/><g transform="rotate(0)"><path d="M-4.300 -11.900L0 -16.200L4.300 -11.900" fill="none" stroke="#f6f6f6" stroke-width="2.200" stroke-linejoin="miter" stroke-miterlimit="6"/><path d="M0 -16V-7" stroke="#f6f6f6" stroke-width="1.900"/><path d="M5.800 -11.900H12.100V-5.600" fill="none" stroke="#f6f6f6" stroke-width="2.200" stroke-linejoin="miter"/><path d="M12 -11.800L5 -4.800" stroke="#f6f6f6" stroke-width="1.900"/></g><g transform="rotate(90)"><path d="M-4.300 -11.900L0 -16.200L4.300 -11.900" fill="none" stroke="#f6f6f6" stroke-width="2.200" stroke-linejoin="miter" stroke-miterlimit="6"/><path d="M0 -16V-7" stroke="#f6f6f6" stroke-width="1.900"/><path d="M5.800 -11.900H12.100V-5.600" fill="none" stroke="#f6f6f6" stroke-width="2.200" stroke-linejoin="miter"/><path d="M12 -11.800L5 -4.800" stroke="#f6f6f6" stroke-width="1.900"/></g><g transform="rotate(180)"><path d="M-4.300 -11.900L0 -16.200L4.300 -11.900" fill="none" stroke="#f6f6f6" stroke-width="2.200" stroke-linejoin="miter" stroke-miterlimit="6"/><path d="M0 -16V-7" stroke="#f6f6f6" stroke-width="1.900"/><path d="M5.800 -11.900H12.100V-5.600" fill="none" stroke="#f6f6f6" stroke-width="2.200" stroke-linejoin="miter"/><path d="M12 -11.800L5 -4.800" stroke="#f6f6f6" stroke-width="1.900"/></g><g transform="rotate(270)"><path d="M-4.300 -11.900L0 -16.200L4.300 -11.900" fill="none" stroke="#f6f6f6" stroke-width="2.200" stroke-linejoin="miter" stroke-miterlimit="6"/><path d="M0 -16V-7" stroke="#f6f6f6" stroke-width="1.900"/><path d="M5.800 -11.900H12.100V-5.600" fill="none" stroke="#f6f6f6" stroke-width="2.200" stroke-linejoin="miter"/><path d="M12 -11.800L5 -4.800" stroke="#f6f6f6" stroke-width="1.900"/></g><circle r="8.900" fill="#f3f3f3"/></g><rect x="1237.20" y="628.70" width="6.600" height="6.600" fill="#c3d5e2"/><text x="1246.40" y="635.70" font-size="10.200" font-weight="bold" fill="#c9dbe8" textLength="19.400" lengthAdjust="spacingAndGlyphs">SW5</text>
<path d="M1354.00 624.80V582.70q0-4.500 4.500-4.500h34.40q4.500 0 4.500 4.500V624.80z" fill="url(#swg)"/><g transform="translate(1375.50,604.30)"><circle r="12.300" fill="#484848"/><g transform="rotate(0)"><path d="M-4.300 -11.900L0 -16.200L4.300 -11.900" fill="none" stroke="#f6f6f6" stroke-width="2.200" stroke-linejoin="miter" stroke-miterlimit="6"/><path d="M0 -16V-7" stroke="#f6f6f6" stroke-width="1.900"/><path d="M5.800 -11.900H12.100V-5.600" fill="none" stroke="#f6f6f6" stroke-width="2.200" stroke-linejoin="miter"/><path d="M12 -11.800L5 -4.800" stroke="#f6f6f6" stroke-width="1.900"/></g><g transform="rotate(90)"><path d="M-4.300 -11.900L0 -16.200L4.300 -11.900" fill="none" stroke="#f6f6f6" stroke-width="2.200" stroke-linejoin="miter" stroke-miterlimit="6"/><path d="M0 -16V-7" stroke="#f6f6f6" stroke-width="1.900"/><path d="M5.800 -11.900H12.100V-5.600" fill="none" stroke="#f6f6f6" stroke-width="2.200" stroke-linejoin="miter"/><path d="M12 -11.800L5 -4.800" stroke="#f6f6f6" stroke-width="1.900"/></g><g transform="rotate(180)"><path d="M-4.300 -11.900L0 -16.200L4.300 -11.900" fill="none" stroke="#f6f6f6" stroke-width="2.200" stroke-linejoin="miter" stroke-miterlimit="6"/><path d="M0 -16V-7" stroke="#f6f6f6" stroke-width="1.900"/><path d="M5.800 -11.900H12.100V-5.600" fill="none" stroke="#f6f6f6" stroke-width="2.200" stroke-linejoin="miter"/><path d="M12 -11.800L5 -4.800" stroke="#f6f6f6" stroke-width="1.900"/></g><g transform="rotate(270)"><path d="M-4.300 -11.900L0 -16.200L4.300 -11.900" fill="none" stroke="#f6f6f6" stroke-width="2.200" stroke-linejoin="miter" stroke-miterlimit="6"/><path d="M0 -16V-7" stroke="#f6f6f6" stroke-width="1.900"/><path d="M5.800 -11.900H12.100V-5.600" fill="none" stroke="#f6f6f6" stroke-width="2.200" stroke-linejoin="miter"/><path d="M12 -11.800L5 -4.800" stroke="#f6f6f6" stroke-width="1.900"/></g><circle r="8.900" fill="#f3f3f3"/></g><rect x="1361.90" y="628.70" width="6.600" height="6.600" fill="#c3d5e2"/><text x="1371.10" y="635.70" font-size="10.200" font-weight="bold" fill="#c9dbe8" textLength="19.400" lengthAdjust="spacingAndGlyphs">SW6</text>
<rect x="1070.60" y="268.70" width="26.8" height="13.8" rx="5.500" fill="#14324d" opacity="0.950" filter="url(#glow)"/><rect x="1071.70" y="269.80" width="24.6" height="11.6" rx="4.600" fill="#ffffff" stroke="#cfe7f8" stroke-width="1.300"/><text x="1084.00" y="278.95" text-anchor="middle" font-size="9.250" fill="#2b2d30" stroke="#2b2d30" stroke-width="0.300">Gi0/0</text>
<rect x="1147.60" y="267.90" width="26.8" height="13.8" rx="5.500" fill="#14324d" opacity="0.950" filter="url(#glow)"/><rect x="1148.70" y="269.00" width="24.6" height="11.6" rx="4.600" fill="#ffffff" stroke="#cfe7f8" stroke-width="1.300"/><text x="1161.00" y="278.15" text-anchor="middle" font-size="9.250" fill="#2b2d30" stroke="#2b2d30" stroke-width="0.300">Gi0/1</text>
<rect x="1200.00" y="267.70" width="26.8" height="13.8" rx="5.500" fill="#14324d" opacity="0.950" filter="url(#glow)"/><rect x="1201.10" y="268.80" width="24.6" height="11.6" rx="4.600" fill="#ffffff" stroke="#cfe7f8" stroke-width="1.300"/><text x="1213.40" y="277.95" text-anchor="middle" font-size="9.250" fill="#2b2d30" stroke="#2b2d30" stroke-width="0.300">Gi0/1</text>
<rect x="1111.60" y="302.50" width="26.8" height="13.8" rx="5.500" fill="#14324d" opacity="0.950" filter="url(#glow)"/><rect x="1112.70" y="303.60" width="24.6" height="11.6" rx="4.600" fill="#ffffff" stroke="#cfe7f8" stroke-width="1.300"/><text x="1125.00" y="312.75" text-anchor="middle" font-size="9.250" fill="#2b2d30" stroke="#2b2d30" stroke-width="0.300">Gi0/2</text>
<rect x="1237.60" y="302.30" width="26.8" height="13.8" rx="5.500" fill="#14324d" opacity="0.950" filter="url(#glow)"/><rect x="1238.70" y="303.40" width="24.6" height="11.6" rx="4.600" fill="#ffffff" stroke="#cfe7f8" stroke-width="1.300"/><text x="1251.00" y="312.55" text-anchor="middle" font-size="9.250" fill="#2b2d30" stroke="#2b2d30" stroke-width="0.300">Gi0/2</text>
<rect x="1112.50" y="349.60" width="26.8" height="13.8" rx="5.500" fill="#14324d" opacity="0.950" filter="url(#glow)"/><rect x="1113.60" y="350.70" width="24.6" height="11.6" rx="4.600" fill="#ffffff" stroke="#cfe7f8" stroke-width="1.300"/><text x="1125.90" y="359.85" text-anchor="middle" font-size="9.250" fill="#2b2d30" stroke="#2b2d30" stroke-width="0.300">Gi0/2</text>
<rect x="1239.60" y="351.70" width="26.8" height="13.8" rx="5.500" fill="#14324d" opacity="0.950" filter="url(#glow)"/><rect x="1240.70" y="352.80" width="24.6" height="11.6" rx="4.600" fill="#ffffff" stroke="#cfe7f8" stroke-width="1.300"/><text x="1253.00" y="361.95" text-anchor="middle" font-size="9.250" fill="#2b2d30" stroke="#2b2d30" stroke-width="0.300">Gi0/2</text>
<rect x="1147.80" y="389.70" width="26.8" height="13.8" rx="5.500" fill="#14324d" opacity="0.950" filter="url(#glow)"/><rect x="1148.90" y="390.80" width="24.6" height="11.6" rx="4.600" fill="#ffffff" stroke="#cfe7f8" stroke-width="1.300"/><text x="1161.20" y="399.95" text-anchor="middle" font-size="9.250" fill="#2b2d30" stroke="#2b2d30" stroke-width="0.300">Gi0/1</text>
<rect x="1204.40" y="384.10" width="26.8" height="13.8" rx="5.500" fill="#14324d" opacity="0.950" filter="url(#glow)"/><rect x="1205.50" y="385.20" width="24.6" height="11.6" rx="4.600" fill="#ffffff" stroke="#cfe7f8" stroke-width="1.300"/><text x="1217.80" y="394.35" text-anchor="middle" font-size="9.250" fill="#2b2d30" stroke="#2b2d30" stroke-width="0.300">Gi0/1</text>
<rect x="1184.10" y="429.20" width="26.8" height="13.8" rx="5.500" fill="#14324d" opacity="0.950" filter="url(#glow)"/><rect x="1185.20" y="430.30" width="24.6" height="11.6" rx="4.600" fill="#ffffff" stroke="#cfe7f8" stroke-width="1.300"/><text x="1197.50" y="439.45" text-anchor="middle" font-size="9.250" fill="#2b2d30" stroke="#2b2d30" stroke-width="0.300">Gi1/0</text>
<rect x="1080.60" y="444.70" width="26.8" height="13.8" rx="5.500" fill="#14324d" opacity="0.950" filter="url(#glow)"/><rect x="1081.70" y="445.80" width="24.6" height="11.6" rx="4.600" fill="#ffffff" stroke="#cfe7f8" stroke-width="1.300"/><text x="1094.00" y="454.95" text-anchor="middle" font-size="9.250" fill="#2b2d30" stroke="#2b2d30" stroke-width="0.300">Gi0/3</text>
<rect x="1107.60" y="444.70" width="26.8" height="13.8" rx="5.500" fill="#14324d" opacity="0.950" filter="url(#glow)"/><rect x="1108.70" y="445.80" width="24.6" height="11.6" rx="4.600" fill="#ffffff" stroke="#cfe7f8" stroke-width="1.300"/><text x="1121.00" y="454.95" text-anchor="middle" font-size="9.250" fill="#2b2d30" stroke="#2b2d30" stroke-width="0.300">Gi1/0</text>
<rect x="1134.20" y="444.70" width="26.8" height="13.8" rx="5.500" fill="#14324d" opacity="0.950" filter="url(#glow)"/><rect x="1135.30" y="445.80" width="24.6" height="11.6" rx="4.600" fill="#ffffff" stroke="#cfe7f8" stroke-width="1.300"/><text x="1147.60" y="454.95" text-anchor="middle" font-size="9.250" fill="#2b2d30" stroke="#2b2d30" stroke-width="0.300">Gi1/1</text>
<rect x="1158.40" y="449.30" width="26.8" height="13.8" rx="5.500" fill="#14324d" opacity="0.950" filter="url(#glow)"/><rect x="1159.50" y="450.40" width="24.6" height="11.6" rx="4.600" fill="#ffffff" stroke="#cfe7f8" stroke-width="1.300"/><text x="1171.80" y="459.55" text-anchor="middle" font-size="9.250" fill="#2b2d30" stroke="#2b2d30" stroke-width="0.300">Gi1/2</text>
<rect x="1212.00" y="446.50" width="26.8" height="13.8" rx="5.500" fill="#14324d" opacity="0.950" filter="url(#glow)"/><rect x="1213.10" y="447.60" width="24.6" height="11.6" rx="4.600" fill="#ffffff" stroke="#cfe7f8" stroke-width="1.300"/><text x="1225.40" y="456.75" text-anchor="middle" font-size="9.250" fill="#2b2d30" stroke="#2b2d30" stroke-width="0.300">Gi1/1</text>
<rect x="1240.30" y="446.50" width="26.8" height="13.8" rx="5.500" fill="#14324d" opacity="0.950" filter="url(#glow)"/><rect x="1241.40" y="447.60" width="24.6" height="11.6" rx="4.600" fill="#ffffff" stroke="#cfe7f8" stroke-width="1.300"/><text x="1253.70" y="456.75" text-anchor="middle" font-size="9.250" fill="#2b2d30" stroke="#2b2d30" stroke-width="0.300">Gi1/2</text>
<rect x="1268.20" y="446.50" width="26.8" height="13.8" rx="5.500" fill="#14324d" opacity="0.950" filter="url(#glow)"/><rect x="1269.30" y="447.60" width="24.6" height="11.6" rx="4.600" fill="#ffffff" stroke="#cfe7f8" stroke-width="1.300"/><text x="1281.60" y="456.75" text-anchor="middle" font-size="9.250" fill="#2b2d30" stroke="#2b2d30" stroke-width="0.300">Gi1/3</text>
<rect x="997.20" y="547.10" width="26.8" height="13.8" rx="5.500" fill="#14324d" opacity="0.950" filter="url(#glow)"/><rect x="998.30" y="548.20" width="24.6" height="11.6" rx="4.600" fill="#ffffff" stroke="#cfe7f8" stroke-width="1.300"/><text x="1010.60" y="557.35" text-anchor="middle" font-size="9.250" fill="#2b2d30" stroke="#2b2d30" stroke-width="0.300">Gi0/3</text>
<rect x="1028.50" y="544.80" width="26.8" height="13.8" rx="5.500" fill="#14324d" opacity="0.950" filter="url(#glow)"/><rect x="1029.60" y="545.90" width="24.6" height="11.6" rx="4.600" fill="#ffffff" stroke="#cfe7f8" stroke-width="1.300"/><text x="1041.90" y="555.05" text-anchor="middle" font-size="9.250" fill="#2b2d30" stroke="#2b2d30" stroke-width="0.300">Gi1/0</text>
<rect x="1104.60" y="546.80" width="26.8" height="13.8" rx="5.500" fill="#14324d" opacity="0.950" filter="url(#glow)"/><rect x="1105.70" y="547.90" width="24.6" height="11.6" rx="4.600" fill="#ffffff" stroke="#cfe7f8" stroke-width="1.300"/><text x="1118.00" y="557.05" text-anchor="middle" font-size="9.250" fill="#2b2d30" stroke="#2b2d30" stroke-width="0.300">Gi1/0</text>
<rect x="1136.10" y="547.60" width="26.8" height="13.8" rx="5.500" fill="#14324d" opacity="0.950" filter="url(#glow)"/><rect x="1137.20" y="548.70" width="24.6" height="11.6" rx="4.600" fill="#ffffff" stroke="#cfe7f8" stroke-width="1.300"/><text x="1149.50" y="557.85" text-anchor="middle" font-size="9.250" fill="#2b2d30" stroke="#2b2d30" stroke-width="0.300">Gi1/1</text>
<rect x="1211.90" y="547.20" width="26.8" height="13.8" rx="5.500" fill="#14324d" opacity="0.950" filter="url(#glow)"/><rect x="1213.00" y="548.30" width="24.6" height="11.6" rx="4.600" fill="#ffffff" stroke="#cfe7f8" stroke-width="1.300"/><text x="1225.30" y="557.45" text-anchor="middle" font-size="9.250" fill="#2b2d30" stroke="#2b2d30" stroke-width="0.300">Gi1/1</text>
<rect x="1243.60" y="547.90" width="26.8" height="13.8" rx="5.500" fill="#14324d" opacity="0.950" filter="url(#glow)"/><rect x="1244.70" y="549.00" width="24.6" height="11.6" rx="4.600" fill="#ffffff" stroke="#cfe7f8" stroke-width="1.300"/><text x="1257.00" y="558.15" text-anchor="middle" font-size="9.250" fill="#2b2d30" stroke="#2b2d30" stroke-width="0.300">Gi1/2</text>
<rect x="1345.00" y="547.70" width="26.8" height="13.8" rx="5.500" fill="#14324d" opacity="0.950" filter="url(#glow)"/><rect x="1346.10" y="548.80" width="24.6" height="11.6" rx="4.600" fill="#ffffff" stroke="#cfe7f8" stroke-width="1.300"/><text x="1358.40" y="557.95" text-anchor="middle" font-size="9.250" fill="#2b2d30" stroke="#2b2d30" stroke-width="0.300">Gi1/3</text>
<rect x="1306.30" y="573.60" width="26.8" height="13.8" rx="5.500" fill="#14324d" opacity="0.950" filter="url(#glow)"/><rect x="1307.40" y="574.70" width="24.6" height="11.6" rx="4.600" fill="#ffffff" stroke="#cfe7f8" stroke-width="1.300"/><text x="1319.70" y="583.85" text-anchor="middle" font-size="9.250" fill="#2b2d30" stroke="#2b2d30" stroke-width="0.300">Gi1/2</text>
<rect x="1476" y="66.300" width="124" height="24.800" fill="#222c34"/>
<text x="1484" y="84.800" font-size="11.600" font-weight="bold" fill="#ffffff">Notifications</text>
<circle cx="1600.500" cy="813" r="17.200" fill="#050505" stroke="#7f8387" stroke-width="1.100"/>
<path d="M1601 807L1594.800 813L1601 819" fill="none" stroke="#dddddd" stroke-width="1.700"/>
<rect x="800" y="844" width="800" height="5.200" fill="#000000"/>
<rect x="800" y="849.200" width="800" height="16" fill="#e7e7e7"/>
<g fill="none" stroke="#8a8a8a" stroke-width="1.100"><path d="M1474 856.500l2-4h7l2 4v4.500h-11z"/><path d="M1474 858.500h11"/><rect x="1491" y="853" width="6" height="5.500"/><rect x="1495" y="856.500" width="6.500" height="6"/></g>
<circle cx="1482.800" cy="863" r="2.300" fill="#78c043"/><circle cx="1500.200" cy="863" r="2.300" fill="#78c043"/>
<g fill="none" stroke="#c2c2c2" stroke-width="1.100"><path d="M1509 855h9M1510 856v8h7v-8"/><circle cx="1530.500" cy="859" r="4"/><path d="M1530.500 856.500v4"/><path d="M1544 859c1.500-2 3.500-2 4.500 0s3 2 4.500 0"/></g>
<rect x="1561" y="852" width="1" height="13" fill="#c6c6c6"/>
<path d="M1569.500 853.500h11v7l-3 3.500h-8z" fill="none" stroke="#707070" stroke-width="1.100"/>
</svg>
<div class="abs" style="left:0px;top:0px;width:800px;height:33.7px;background:#488dca;"></div>
<div class="abs" style="left:0px;top:0px;width:800px;height:1.2px;background:#3f82bf;"></div>
<div class="abs" style="left:0px;top:33.5px;width:800px;height:32.8px;background:#f7f7f7;"></div>
<div class="abs" style="left:0px;top:36.8px;width:644.6px;height:26.4px;background:#ffffff;border-radius:0 5px 5px 0"></div>
<div class="abs" style="left:0px;top:65.5px;width:800px;height:0.8px;background:#e3e3e3;"></div>
<div class="abs" style="left:0px;top:7.6px;width:73px;height:26.5px;background:#f7f7f7;border-radius:0 5px 0 0"></div>
<svg style="left:73px;top:28.600px" width="6" height="5.200" viewBox="0 0 6 5.200"><path d="M0 5.200V0Q0 5.200 6 5.200z" fill="#f7f7f7"/></svg>
<svg style="left:55.1px;top:17.7px" width="7" height="7" viewBox="0 0 7 7"><path d="M0.300 0.300L6.7 6.7M6.7 0.300L0.300 6.7" stroke="#2b2b2b" stroke-width="1.1" fill="none"/></svg>
<svg style="left:81.500px;top:15.500px" width="11" height="11" viewBox="0 0 11 11"><path d="M5.500 0v11M0 5.500h11" stroke="#1d4f7e" stroke-width="1.200"/></svg>
<div class="abs" style="left:767.5px;top:12px;width:8.5px;height:1.2px;background:#2f7fc4;"></div>
<svg style="left:591px;top:43px" width="14" height="14" viewBox="0 0 14 14"><circle cx="9.600" cy="4.400" r="3.300" fill="none" stroke="#3d3d3d" stroke-width="1.150"/><path d="M7.200 6.800L1.500 12.500v-1.800M3.600 10.400l1.300 1.300" stroke="#3d3d3d" stroke-width="1.150" fill="none" stroke-linecap="round"/></svg>
<svg style="left:620px;top:41px" width="18" height="18" viewBox="0 0 18 18"><path d="M7.500 2l1.900 4 4.400.550-2.300 2.200M7.500 2L5.600 6l-4.400.550 3.250 3-.850 4.400L7.500 12l1.200.700" fill="none" stroke="#3d3d3d" stroke-width="1.100" stroke-linejoin="round" stroke-linecap="round"/><circle cx="12.400" cy="12.800" r="3.300" fill="#555555"/><path d="M12.400 10.900v3.800M10.500 12.800h3.800" stroke="#ffffff" stroke-width="1.100"/></svg>
<svg style="left:661.500px;top:43.500px" width="15" height="12.600" viewBox="0 0 19 16"><path d="M6.800 1.300l1.900 4.100 4.400.550-3.250 3 .850 4.400-3.900-2.200-3.900 2.200.850-4.400L.500 5.950l4.400-.550z" fill="none" stroke="#2b2b2b" stroke-width="1.500" stroke-linejoin="round"/><path d="M13.500 6.500h5M13 9.300h5.500M12.500 12.100h6" stroke="#2b2b2b" stroke-width="1.500"/></svg>
<svg style="left:698px;top:42.200px" width="15.500" height="15.500" viewBox="0 0 18 18"><path d="M5 11.500L2.600 6.300a2 2 0 0 1 1-2.600l5-2.300a2 2 0 0 1 2.600 1l.4 1" fill="none" stroke="#2b2b2b" stroke-width="1.350"/><rect x="6" y="5.500" width="10.500" height="10.500" rx="2.500" fill="none" stroke="#2b2b2b" stroke-width="1.350"/><path d="M11.250 8v5.500M8.500 10.750H14" stroke="#2b2b2b" stroke-width="1.350"/></svg>
<div class="abs" style="left:727px;top:37.300px;width:90px;height:25px;border:1.600px solid #262626;border-radius:12.500px;background:#ffffff"></div>
<div class="abs" style="left:797.5px;top:46px;width:4px;height:8px;background:#555;border-radius:4px"></div>
</div>
<div id="tx"><span class="t" style="left:8.20px;top:3.00px;font:bold 6.83px/16px 'Liberation Sans', sans-serif;color:#ffffff;">PC</span>
<span class="t" style="left:30.00px;top:5.00px;font:normal 9.90px/16px 'Liberation Sans', sans-serif;color:#bbbbbb;letter-spacing:-0.241px;text-decoration:underline;text-decoration-thickness:0.7px;text-underline-offset:1.5px;text-decoration-color:transparent;">File</span>
<span class="t" style="left:55.60px;top:5.00px;font:normal 9.90px/16px 'Liberation Sans', sans-serif;color:#bbbbbb;letter-spacing:-0.166px;text-decoration:underline;text-decoration-thickness:0.7px;text-underline-offset:1.5px;text-decoration-color:transparent;">Edit</span>
<span class="t" style="left:83.50px;top:5.00px;font:normal 9.90px/16px 'Liberation Sans', sans-serif;color:#bbbbbb;letter-spacing:-0.196px;text-decoration:underline;text-decoration-thickness:0.7px;text-underline-offset:1.5px;text-decoration-color:transparent;">View</span>
<span class="t" style="left:114.00px;top:5.00px;font:normal 9.90px/16px 'Liberation Sans', sans-serif;color:#bbbbbb;letter-spacing:-0.009px;text-decoration:underline;text-decoration-thickness:0.7px;text-underline-offset:1.5px;text-decoration-color:transparent;">Navigate</span>
<span class="t" style="left:163.50px;top:5.00px;font:normal 9.90px/16px 'Liberation Sans', sans-serif;color:#bbbbbb;letter-spacing:-0.042px;text-decoration:underline;text-decoration-thickness:0.7px;text-underline-offset:1.5px;text-decoration-color:transparent;">Code</span>
<span class="t" style="left:197.00px;top:5.00px;font:normal 9.90px/16px 'Liberation Sans', sans-serif;color:#bbbbbb;letter-spacing:-0.052px;text-decoration:underline;text-decoration-thickness:0.7px;text-underline-offset:1.5px;text-decoration-color:transparent;">Refactor</span>
<span class="t" style="left:245.00px;top:5.00px;font:normal 9.90px/16px 'Liberation Sans', sans-serif;color:#bbbbbb;letter-spacing:-0.392px;text-decoration:underline;text-decoration-thickness:0.7px;text-underline-offset:1.5px;text-decoration-color:transparent;">Run</span>
<span class="t" style="left:273.00px;top:5.00px;font:normal 9.90px/16px 'Liberation Sans', sans-serif;color:#bbbbbb;letter-spacing:-0.025px;text-decoration:underline;text-decoration-thickness:0.7px;text-underline-offset:1.5px;text-decoration-color:transparent;">Tools</span>
<span class="t" style="left:306.50px;top:5.00px;font:normal 9.90px/16px 'Liberation Sans', sans-serif;color:#bbbbbb;letter-spacing:-0.786px;text-decoration:underline;text-decoration-thickness:0.7px;text-underline-offset:1.5px;text-decoration-color:transparent;">VCS</span>
<span class="t" style="left:334.00px;top:5.00px;font:normal 9.90px/16px 'Liberation Sans', sans-serif;color:#bbbbbb;letter-spacing:0.296px;text-decoration:underline;text-decoration-thickness:0.7px;text-underline-offset:1.5px;text-decoration-color:transparent;">Window</span>
<span class="t" style="left:382.00px;top:5.00px;font:normal 9.90px/16px 'Liberation Sans', sans-serif;color:#bbbbbb;letter-spacing:-0.093px;text-decoration:underline;text-decoration-thickness:0.7px;text-underline-offset:1.5px;text-decoration-color:transparent;">Help</span>
<span class="t" style="left:423.00px;top:5.00px;font:normal 9.90px/16px 'Liberation Sans', sans-serif;color:#8c8f91;letter-spacing:0.227px;">NetworkAutomation - main.py</span>
<span class="t" style="left:11.00px;top:29.50px;font:bold 9.90px/16px 'Liberation Sans', sans-serif;color:#c3c5c7;letter-spacing:0.115px;">NetworkAutomation</span>
<span class="t" style="left:134.50px;top:29.50px;font:normal 9.90px/16px 'Liberation Sans', sans-serif;color:#bbbbbb;letter-spacing:0.191px;">main.py</span>
<span class="t" style="left:638.50px;top:29.00px;font:normal 9.90px/16px 'Liberation Sans', sans-serif;color:#bbbbbb;letter-spacing:0.257px;">main</span>
<span class="t" style="left:42.50px;top:52.50px;font:normal 9.90px/16px 'Liberation Sans', sans-serif;color:#bbbbbb;letter-spacing:0.191px;">main.py</span>
<span class="t" style="left:120.00px;top:52.50px;font:normal 9.90px/16px 'Liberation Sans', sans-serif;color:#bbbbbb;letter-spacing:0.047px;">router_ip</span>
<span class="t" style="left:201.00px;top:52.50px;font:normal 9.90px/16px 'Liberation Sans', sans-serif;color:#bbbbbb;letter-spacing:-0.107px;">core_switch_ip</span>
<span class="t" style="left:306.50px;top:52.50px;font:normal 9.90px/16px 'Liberation Sans', sans-serif;color:#bbbbbb;letter-spacing:-0.221px;">access_switch_ip</span>
<span class="t" style="left:433.50px;top:52.50px;font:normal 9.90px/16px 'Liberation Sans', sans-serif;color:#bbbbbb;letter-spacing:0.227px;">networkAutomation.py</span>
<span class="t" style="left:753.80px;top:75.00px;font:normal 9.90px/16px 'Liberation Sans', sans-serif;color:#a9aaab;">3</span>
<span class="t" style="left:74.00px;top:555.70px;font:normal 9.90px/16px 'Liberation Sans', sans-serif;color:#bbbbbb;letter-spacing:0.075px;">for file in file_list</span>
<span class="t" style="left:166.00px;top:555.70px;font:normal 9.90px/16px 'Liberation Sans', sans-serif;color:#bbbbbb;letter-spacing:0.090px;">with open(command_list[i]) as e</span>
<span class="t" style="left:465.50px;top:555.70px;font:normal 9.90px/16px 'Liberation Sans', sans-serif;color:#bbbbbb;letter-spacing:0.112px;">network_automation()</span>
<span class="t" style="left:24.00px;top:576.50px;font:normal 9.90px/16px 'Liberation Sans', sans-serif;color:#bbbbbb;letter-spacing:-0.103px;">Run:</span>
<span class="t" style="left:77.00px;top:576.50px;font:normal 9.90px/16px 'Liberation Sans', sans-serif;color:#d0d2d4;letter-spacing:0.132px;">main</span>
<span class="t" style="left:40.00px;top:832.80px;font:normal 9.90px/16px 'Liberation Sans', sans-serif;color:#d6d8da;letter-spacing:-0.225px;">Run</span>
<span class="t" style="left:88.00px;top:832.80px;font:normal 9.90px/16px 'Liberation Sans', sans-serif;color:#bbbbbb;letter-spacing:-0.608px;">TODO</span>
<span class="t" style="left:146.00px;top:832.80px;font:normal 9.90px/16px 'Liberation Sans', sans-serif;color:#bbbbbb;letter-spacing:-0.416px;">Problems</span>
<span class="t" style="left:215.50px;top:832.80px;font:normal 9.90px/16px 'Liberation Sans', sans-serif;color:#bbbbbb;letter-spacing:-0.115px;">Terminal</span>
<span class="t" style="left:285.00px;top:832.80px;font:normal 9.90px/16px 'Liberation Sans', sans-serif;color:#bbbbbb;letter-spacing:-0.172px;">Python Console</span>
<span class="t" style="left:730.50px;top:832.80px;font:normal 9.90px/16px 'Liberation Sans', sans-serif;color:#bbbbbb;letter-spacing:-0.233px;">Event Log</span>
<span class="t" style="left:508.00px;top:849.30px;font:normal 9.90px/16px 'Liberation Sans', sans-serif;color:#bbbbbb;letter-spacing:-0.841px;">CRLF</span>
<span class="t" style="left:540.00px;top:849.30px;font:normal 9.90px/16px 'Liberation Sans', sans-serif;color:#bbbbbb;letter-spacing:-0.312px;">UTF-8</span>
<span class="t" style="left:576.00px;top:849.30px;font:normal 9.90px/16px 'Liberation Sans', sans-serif;color:#bbbbbb;letter-spacing:-0.329px;">4 spaces</span>
<span class="t" style="left:622.00px;top:849.30px;font:normal 9.90px/16px 'Liberation Sans', sans-serif;color:#bbbbbb;letter-spacing:0.131px;">Python 3.8 (NetworkAutomation)</span>
<span class="t" style="left:1539.00px;top:41.80px;font:normal 10.00px/16px 'Liberation Sans', sans-serif;color:#1f1f1f;letter-spacing:-0.023px;">Not syncing</span>
<span class="t" style="left:800.30px;top:43.00px;font:normal 13.20px/16px 'Liberation Sans', sans-serif;color:#6b6b6b;letter-spacing:-0.125px;">/legacy/</span></div>
</body></html>
